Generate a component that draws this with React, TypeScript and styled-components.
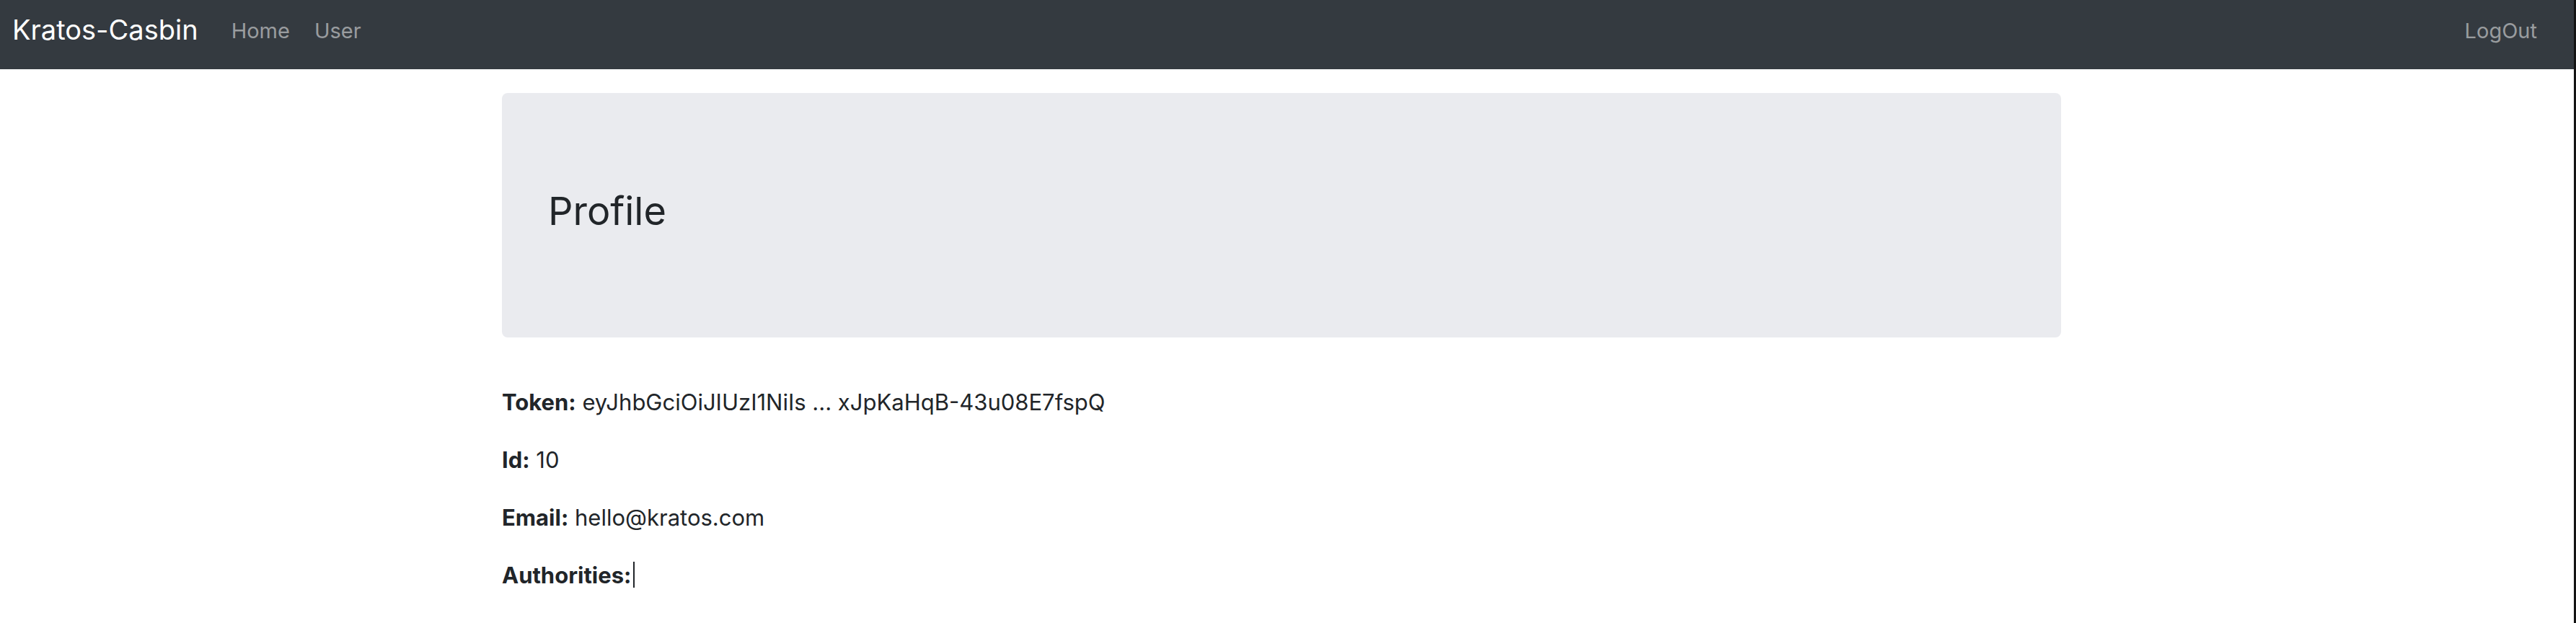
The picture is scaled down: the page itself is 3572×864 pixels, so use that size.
import React from "react";
import styled, { createGlobalStyle } from "styled-components";

const GlobalStyle = createGlobalStyle`
  html, body {
    margin: 0;
    padding: 0;
    background: #fff;
  }
  body {
    font-family: Inter, "Noto Sans", "Liberation Sans", sans-serif;
    color: #212529;
  }
`;

const Page = styled.div`
  min-height: 864px;
  box-sizing: border-box;
  border-right: 3px solid #141414;
`;

const Navbar = styled.nav`
  height: 96px;
  box-sizing: border-box;
  background: #343a40;
  display: flex;
  align-items: flex-start;
  padding: 12px 34px 0 17px;
`;

const Brand = styled.a`
  font-size: 38px;
  line-height: 58px;
  color: #fff;
  text-decoration: none;
  margin-right: 29px;
`;

const NavLink = styled.a<{ $push?: boolean }>`
  font-size: 29px;
  line-height: 44px;
  margin-top: 9px;
  padding: 0 17px;
  color: rgba(255, 255, 255, 0.5);
  text-decoration: none;
  margin-left: ${(p) => (p.$push ? "auto" : "0")};
`;

const Main = styled.main`
  padding-right: 15px;
`;

const Container = styled.div`
  width: 2162px;
  margin: 0 auto;
  padding-top: 33px;
`;

const Jumbotron = styled.div`
  background: #eaebef;
  border-radius: 8px;
  padding: 131px 64px 142px;
  margin-bottom: 67px;
`;

const Title = styled.h1`
  margin: 0;
  font-size: 54px;
  line-height: 66px;
  font-weight: 400;
`;

const Field = styled.p`
  margin: 0 0 34px;
  font-size: 31px;
  line-height: 46px;
`;

const Label = styled.strong`
  font-weight: 700;
`;

const Caret = styled.span`
  display: inline-block;
  width: 2px;
  height: 36px;
  margin-left: 3px;
  background: #212529;
  vertical-align: -6px;
`;

export default function App() {
  return (
    <Page>
      <GlobalStyle />
      <Navbar>
        <Brand href="#">Kratos-Casbin</Brand>
        <NavLink href="#">Home</NavLink>
        <NavLink href="#">User</NavLink>
        <NavLink href="#" $push>
          LogOut
        </NavLink>
      </Navbar>
      <Main>
        <Container>
          <Jumbotron>
            <Title>Profile</Title>
          </Jumbotron>
          <Field>
            <Label>Token:</Label> eyJhbGciOiJIUzI1NiIs ... xJpKaHqB-43u08E7fspQ
          </Field>
          <Field>
            <Label>Id:</Label> 10
          </Field>
          <Field>
            <Label>Email:</Label> hello@kratos.com
          </Field>
          <Field>
            <Label>Authorities:</Label>
            <Caret />
          </Field>
        </Container>
      </Main>
    </Page>
  );
}
